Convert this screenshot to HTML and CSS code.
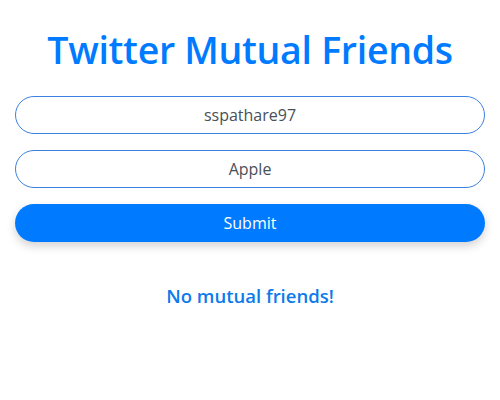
FILE: index.html
```html
<!DOCTYPE html>
<html>
<head>
<meta charset="utf-8">
<link rel="stylesheet" href="styles.css">
</head>
<body>
<div class="app">
  <h1 class="title">Twitter Mutual Friends</h1>
  <form class="form">
    <input class="field" type="text" value="sspathare97">
    <input class="field" type="text" value="Apple">
    <button class="submit" type="button">Submit</button>
  </form>
  <p class="result">No mutual friends!</p>
</div>
</body>
</html>
```
FILE: styles.css
```css
html, body {
  margin: 0;
  padding: 0;
  background: #fff;
}
body {
  font-family: "Open Sans", "Noto Sans", sans-serif;
}
.app {
  padding: 0 15px;
  display: flex;
  flex-direction: column;
  align-items: stretch;
}
.title {
  margin: 24px 0 0;
  text-align: center;
  color: #007bff;
  font-weight: 600;
  font-size: 37.5px;
  line-height: 52px;
  letter-spacing: -0.3px;
}
.form {
  display: flex;
  flex-direction: column;
  gap: 16px;
  margin-top: 20px;
}
.field {
  box-sizing: border-box;
  height: 38px;
  border: 1px solid #3b82e0;
  border-radius: 19px;
  text-align: center;
  font-family: inherit;
  font-size: 16px;
  color: #495057;
  background: #fff;
  outline: none;
  padding: 0 12px;
}
.submit {
  height: 38px;
  border: none;
  border-radius: 19px;
  background: #007bff;
  color: #fff;
  font-family: inherit;
  font-size: 16px;
  box-shadow: 0 4px 10px rgba(0,0,0,0.18);
}
.result {
  margin: 41px 0 0;
  text-align: center;
  color: #0d7bea;
  font-weight: 600;
  font-size: 18.5px;
}
```
